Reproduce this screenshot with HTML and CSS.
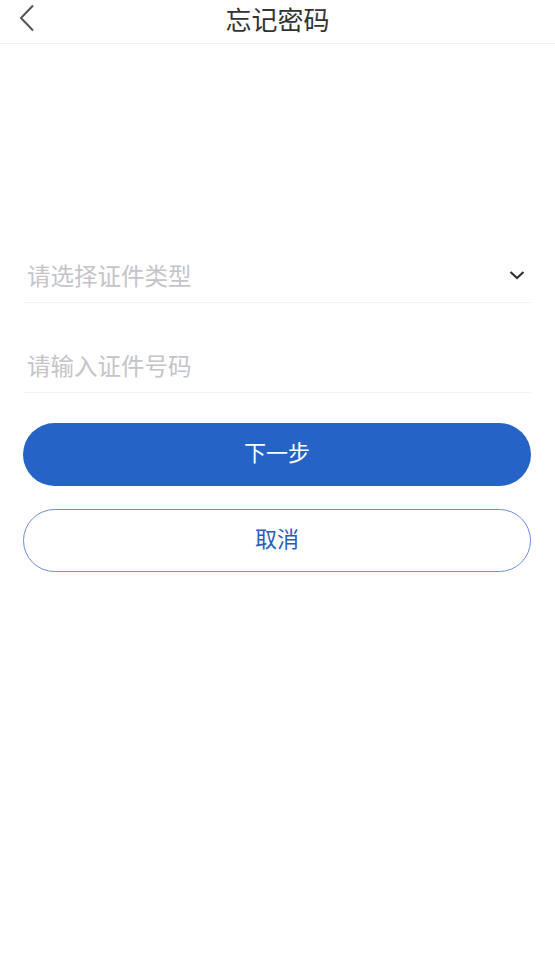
FILE: index.html
```html
<!DOCTYPE html>
<html lang="zh">
<head>
<meta charset="utf-8">
<title>忘记密码</title>
<link rel="stylesheet" href="styles.css">
</head>
<body>
<header class="nav">
  <button class="back" aria-label="返回">
    <svg width="16" height="28" viewBox="0 0 16 28"><path d="M14 1.5 L2 14 L14 26.5" fill="none" stroke="#555" stroke-width="2"/></svg>
  </button>
  <h1 class="title">忘记密码</h1>
</header>
<main class="form">
  <div class="field">
    <span class="placeholder">请选择证件类型</span>
    <svg class="chev" width="16" height="10" viewBox="0 0 16 10"><path d="M1.5 2 L8 8 L14.5 2" fill="none" stroke="#333" stroke-width="2.2"/></svg>
  </div>
  <div class="field">
    <span class="placeholder">请输入证件号码</span>
  </div>
  <button class="btn primary">下一步</button>
  <button class="btn outline">取消</button>
</main>
</body>
</html>
```
FILE: styles.css
```css
* { box-sizing: border-box; }
html, body { margin: 0; padding: 0; background: #fff; }
body {
  font-family: "Noto Sans CJK SC", "Noto Sans", sans-serif;
  width: 555px;
  height: 975px;
}
.nav {
  height: 44px;
  border-bottom: 1px solid #f0f0f0;
  display: flex;
  align-items: center;
  justify-content: center;
  position: relative;
}
.back {
  position: absolute;
  left: 19px;
  top: 4px;
  border: 0;
  background: none;
  padding: 0;
  width: 16px;
  height: 28px;
}
.back svg { display: block; }
.title {
  margin: 0;
  font-size: 26px;
  font-weight: 400;
  color: #333;
  line-height: 36px;
  margin-top: -6px;
}
.form {
  padding: 0 24px 0 23px;
  margin-top: 169px;
  display: flex;
  flex-direction: column;
}
.field {
  height: 90px;
  display: flex;
  align-items: flex-end;
  justify-content: space-between;
  border-bottom: 1px solid #f2f2f2;
  padding: 0 6px 12px 4px;
}
.placeholder {
  font-size: 23.5px;
  color: #c4c4c9;
  line-height: 30px;
}
.chev { margin-bottom: 10px; }
.btn {
  height: 63px;
  border-radius: 32px;
  font-family: inherit;
  font-size: 22px;
  display: flex;
  align-items: center;
  justify-content: center;
  width: 100%;
  padding: 0 0 7px;
}
.primary {
  margin-top: 30px;
  background: #2563c7;
  color: #fff;
  border: 0;
}
.outline {
  margin-top: 23px;
  background: #fff;
  color: #2a5cb8;
  border: 1px solid #6d8fd4;
}
```
